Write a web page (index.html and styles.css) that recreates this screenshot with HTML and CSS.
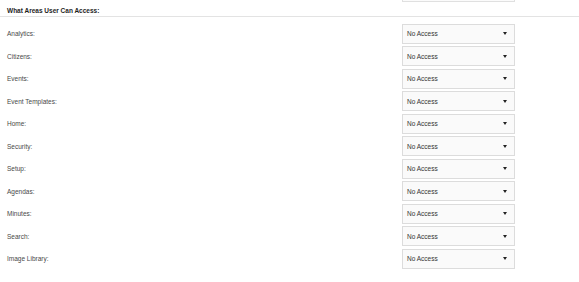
FILE: index.html
```html
<!DOCTYPE html>
<html>
<head>
<meta charset="utf-8">
<link rel="stylesheet" href="styles.css">
</head>
<body>
<div class="top">
  <div class="top-spacer"></div>
  <div class="top-box"></div>
</div>
<div class="section">
  <div class="heading">What Areas User Can Access:</div>
  <div class="rows">
    <div class="row"><span class="label">Analytics:</span><div class="select"><span>No Access</span><i class="arrow"></i></div></div>
    <div class="row"><span class="label">Citizens:</span><div class="select"><span>No Access</span><i class="arrow"></i></div></div>
    <div class="row"><span class="label">Events:</span><div class="select"><span>No Access</span><i class="arrow"></i></div></div>
    <div class="row"><span class="label">Event Templates:</span><div class="select"><span>No Access</span><i class="arrow"></i></div></div>
    <div class="row"><span class="label">Home:</span><div class="select"><span>No Access</span><i class="arrow"></i></div></div>
    <div class="row"><span class="label">Security:</span><div class="select"><span>No Access</span><i class="arrow"></i></div></div>
    <div class="row"><span class="label">Setup:</span><div class="select"><span>No Access</span><i class="arrow"></i></div></div>
    <div class="row"><span class="label">Agendas:</span><div class="select"><span>No Access</span><i class="arrow"></i></div></div>
    <div class="row"><span class="label">Minutes:</span><div class="select"><span>No Access</span><i class="arrow"></i></div></div>
    <div class="row"><span class="label">Search:</span><div class="select"><span>No Access</span><i class="arrow"></i></div></div>
    <div class="row"><span class="label">Image Library:</span><div class="select"><span>No Access</span><i class="arrow"></i></div></div>
  </div>
</div>
</body>
</html>
```
FILE: styles.css
```css
html, body {
  margin: 0;
  padding: 0;
  background: #ffffff;
  font-family: "Liberation Sans", Arial, sans-serif;
  color: #333;
  overflow: hidden;
}
.top {
  display: grid;
  grid-template-columns: 402px 113px;
  height: 2px;
}
.top-box {
  border: 1px solid #e0e0e0;
  border-top: none;
  background: #fbfbfb;
}
.section {
  padding-top: 4px;
}
.heading {
  font-weight: bold;
  font-size: 6.5px;
  color: #1e1e1e;
  padding: 0 0 0 7px;
  height: 10px;
  line-height: 10px;
  border-bottom: 1px solid #e3e3e3;
}
.rows {
  padding-top: 5.5px;
}
.row {
  display: grid;
  grid-template-columns: 402px 113px;
  height: 22.5px;
  align-items: center;
}
.label {
  font-size: 6.5px;
  padding-left: 7px;
  color: #484848;
}
.select {
  height: 20px;
  box-sizing: border-box;
  border: 1px solid #dcdcdc;
  background: #fafafa;
  display: flex;
  align-items: center;
  justify-content: space-between;
  padding: 0 7px 0 4px;
  font-size: 6.5px;
  color: #333;
}
.arrow {
  width: 0;
  height: 0;
  border-left: 2.5px solid transparent;
  border-right: 2.5px solid transparent;
  border-top: 3px solid #222;
}
```
